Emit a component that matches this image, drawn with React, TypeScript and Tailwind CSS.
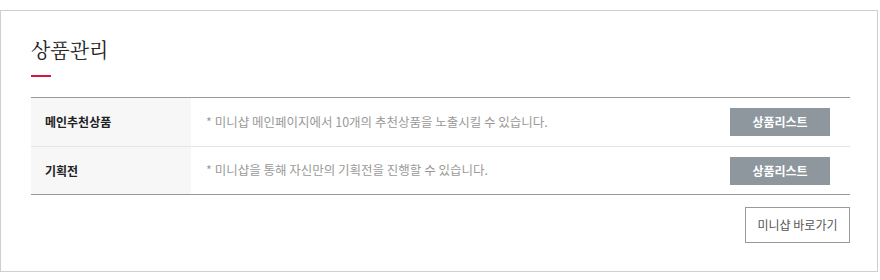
import React from 'react';

const rows = [
  { label: '메인추천상품', desc: '* 미니샵 메인페이지에서 10개의 추천상품을 노출시킬 수 있습니다.' },
  { label: '기획전', desc: '* 미니샵을 통해 자신만의 기획전을 진행할 수 있습니다.' },
];

const App: React.FC = () => {
  return (
    <div className="w-[880px] h-[280px] bg-white pt-[10px] font-['Noto_Sans_CJK_KR',sans-serif]">
      <div className="w-[878px] h-[262px] border border-[#cfcfcf] pl-[30px] pr-[27px] pt-[24px]">
        <h2 className="text-[20px] leading-[30px] text-[#222] font-['Noto_Serif_CJK_KR','Noto_Sans_CJK_KR',serif]">
          상품관리
        </h2>
        <div className="w-[20px] h-[2px] bg-[#d3163d] mt-[10px]"></div>

        <div className="mt-[20px] border-t border-b border-[#999]">
          {rows.map((r, i) => (
            <div
              key={r.label}
              className={`flex h-[48px] ${i > 0 ? 'border-t border-[#e5e5e5]' : ''}`}
            >
              <div className="w-[160px] bg-[#f7f7f7] flex items-center pl-[14px] text-[12px] font-bold text-[#222]">
                {r.label}
              </div>
              <div className="flex-1 flex items-center pl-[15px] text-[12.5px] text-[#999]">
                {r.desc}
              </div>
              <div className="flex items-center pr-[20px]">
                <button className="w-[100px] h-[28px] bg-[#8e979d] text-white text-[12px] font-bold">
                  상품리스트
                </button>
              </div>
            </div>
          ))}
        </div>

        <div className="flex justify-end mt-[12px]">
          <button className="w-[105px] h-[36px] border border-[#999] text-[12px] text-[#555] bg-white">
            미니샵 바로가기
          </button>
        </div>
      </div>
    </div>
  );
};

export default App;
